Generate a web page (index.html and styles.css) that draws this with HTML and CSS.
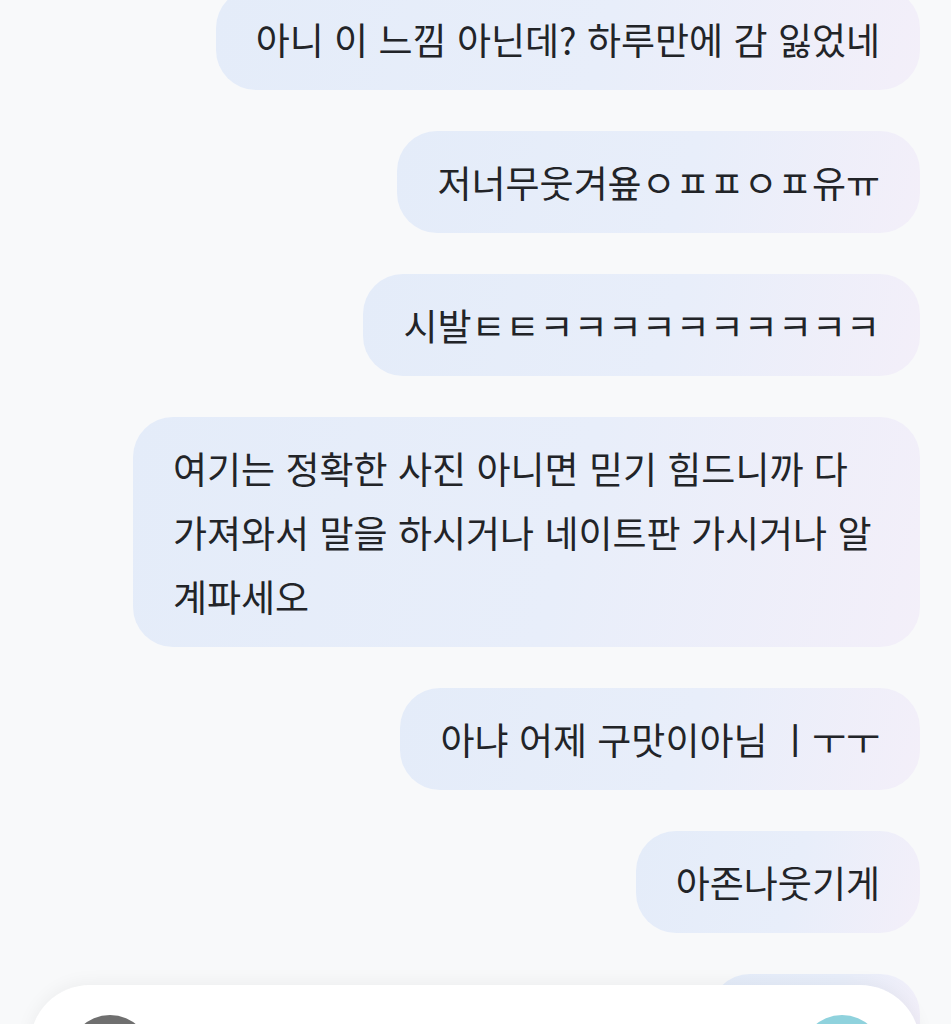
FILE: index.html
```html
<!DOCTYPE html>
<html lang="ko">
<head>
  <meta charset="UTF-8" />
  <meta name="viewport" content="width=device-width, initial-scale=1.0"/>
  <title>채팅</title>
  <link rel="stylesheet" href="styles.css">
</head>
<body>
  <div class="chat">
    <div class="bubble">아니 이 느낌 아닌데? 하루만에 감 잃었네</div>
    <div class="bubble">저너무웃겨욮ㅇㅍㅍㅇㅍ유ㅠ</div>
    <div class="bubble">시발ㅌㅌㅋㅋㅋㅋㅋㅋㅋㅋㅋㅋ</div>
    <div class="bubble">여기는 정확한 사진 아니면 믿기 힘드니까 다 가져와서 말을 하시거나 네이트판 가시거나 알 계파세오</div>
    <div class="bubble">아냐 어제 구맛이아님 ㅣㅜㅜ</div>
    <div class="bubble">아존나웃기게</div>
    <div class="bubble">아 진짜?</div>
  </div>

  <div class="composer">
    <div class="btn-left"></div>
    <div class="btn-send"></div>
  </div>
</body>
</html>
```

FILE: styles.css
```css
body {
  margin: 0;
  height: 1024px;
  overflow: hidden;
  background: #f8f9fa;
  font-family: "Noto Sans CJK KR", "Noto Sans", sans-serif;
  color: #222428;
}
.chat {
  margin-top: -12px;
  padding-right: 31px;
  display: flex;
  flex-direction: column;
  align-items: flex-end;
  gap: 41px;
}
.bubble {
  max-width: 707px;
  padding: 19px 40px;
  border-radius: 40px;
  font-size: 37px;
  line-height: 64px;
  word-break: keep-all;
  background: linear-gradient(105deg, #e4ecf9 0%, #e8eefa 55%, #f3eff9 100%);
}
.composer {
  position: fixed;
  left: 30px;
  right: 31px;
  top: 985px;
  height: 140px;
  padding: 30px 36px 0 38px;
  display: flex;
  justify-content: space-between;
  align-items: flex-start;
  background: #ffffff;
  border-radius: 60px;
  box-shadow: 0 -2px 18px rgba(0, 0, 0, 0.05);
}
.btn-left, .btn-send {
  width: 84px;
  height: 84px;
  border-radius: 50%;
}
.btn-left {
  background: #6f6f6f;
}
.btn-send {
  background: #8fd2dd;
}
```
